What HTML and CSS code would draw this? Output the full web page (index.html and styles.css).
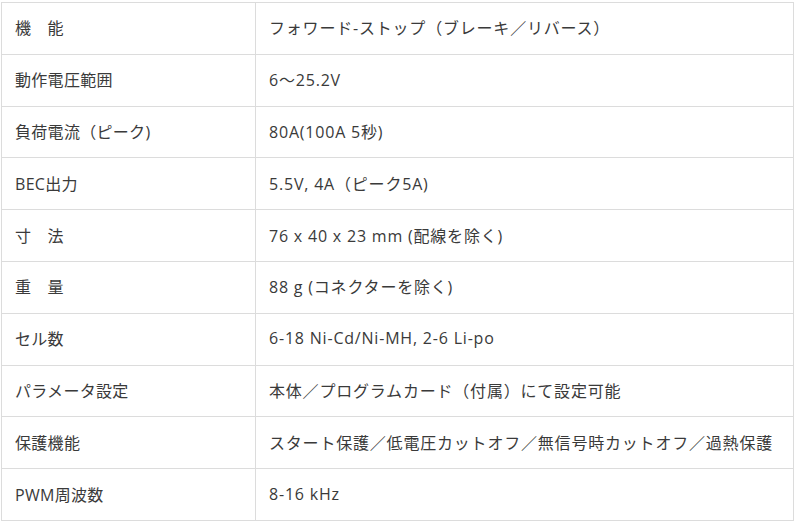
FILE: index.html
```html
<!DOCTYPE html>
<html lang="ja">
<head>
<meta charset="utf-8">
<link rel="stylesheet" href="styles.css">
</head>
<body>
<table class="spec">
<tbody>
<tr><th>機　能</th><td>フォワード-ストップ（ブレーキ／リバース）</td></tr>
<tr><th>動作電圧範囲</th><td>6～25.2V</td></tr>
<tr><th>負荷電流（ピーク)</th><td>80A(100A 5秒)</td></tr>
<tr><th>BEC出力</th><td>5.5V, 4A（ピーク5A)</td></tr>
<tr><th>寸　法</th><td>76 x 40 x 23 mm (配線を除く)</td></tr>
<tr><th>重　量</th><td>88 g (コネクターを除く)</td></tr>
<tr><th>セル数</th><td>6-18 Ni-Cd/Ni-MH, 2-6 Li-po</td></tr>
<tr><th>パラメータ設定</th><td>本体／プログラムカード（付属）にて設定可能</td></tr>
<tr><th>保護機能</th><td>スタート保護／低電圧カットオフ／無信号時カットオフ／過熱保護</td></tr>
<tr><th>PWM周波数</th><td>8-16 kHz</td></tr>
</tbody>
</table>
</body>
</html>
```
FILE: styles.css
```css
html, body {
  margin: 0;
  padding: 0;
  background: #fff;
}
body {
  padding: 2px 0 0 1px;
  font-family: "Open Sans", "Noto Sans CJK JP", sans-serif;
  font-size: 16px;
  color: #3a3a3a;
}
.spec {
  border-collapse: collapse;
  width: 793px;
  table-layout: fixed;
}
.spec tr {
  height: 51.8px;
}
.spec th,
.spec td {
  border: 1px solid #dcdcdc;
  padding: 0 13px 2px;
  text-align: left;
  font-weight: normal;
  vertical-align: middle;
  white-space: nowrap;
  letter-spacing: 0.3px;
}
.spec th {
  width: 227px;
}
.spec td {
  letter-spacing: 0.8px;
}
```
